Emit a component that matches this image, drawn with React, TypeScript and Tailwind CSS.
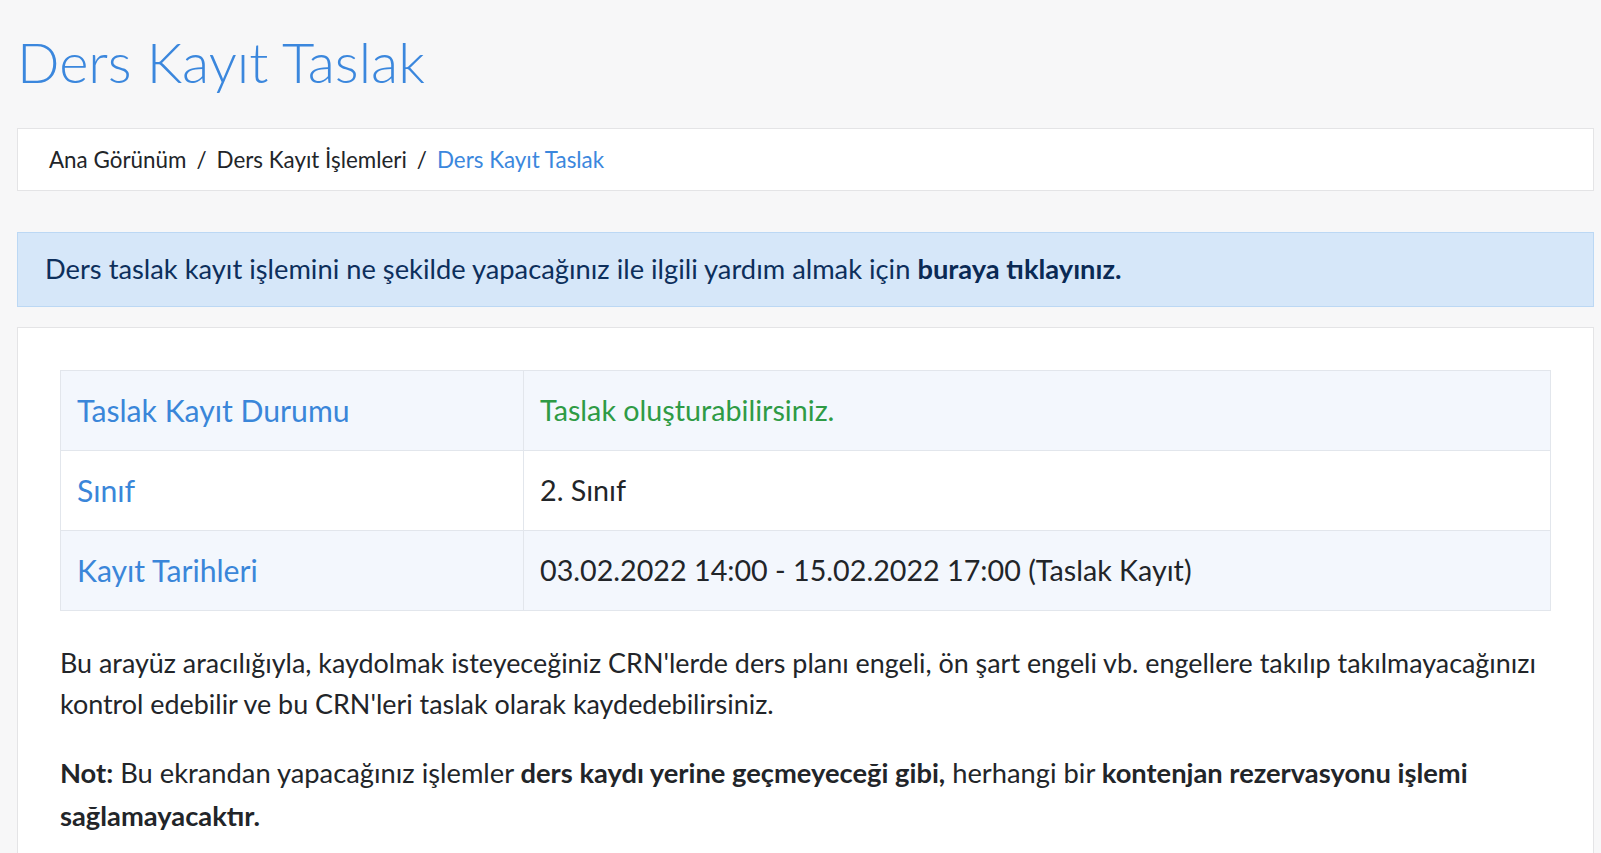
import React from 'react'

const rows = [
  { label: 'Taslak Kayıt Durumu', value: 'Taslak oluşturabilirsiniz.', tone: 'text-[#2e9b45]', striped: true },
  { label: 'Sınıf', value: '2. Sınıf', tone: 'text-[#222529]', striped: false },
  {
    label: 'Kayıt Tarihleri',
    value: '03.02.2022 14:00 - 15.02.2022 17:00 (Taslak Kayıt)',
    tone: 'text-[#222529]',
    striped: true,
  },
]

export default function App() {
  return (
    <div
      className="min-h-screen bg-[#f7f7f8] pl-[17px] pr-[7px] text-[#222529]"
      style={{ fontFamily: 'Lato, "Noto Sans", sans-serif' }}
    >
      <h1 className="pt-[22px] text-[56px] font-light leading-[80px] text-[#3b87dd]">Ders Kayıt Taslak</h1>

      <nav className="mt-[26px] flex h-[63px] items-center border border-[#e4e4e6] bg-white pl-[31px] text-[22.4px]">
        <span>Ana Görünüm</span>
        <span className="px-[10px]">/</span>
        <span>Ders Kayıt İşlemleri</span>
        <span className="px-[10px]">/</span>
        <span className="text-[#3b87dd]">Ders Kayıt Taslak</span>
      </nav>

      <div className="mt-[41px] flex h-[75px] items-center border border-[#bcd8f4] bg-[#d6e7f9] pl-[27px] text-[27.3px] text-[#0d2f5c]">
        <p>
          Ders taslak kayıt işlemini ne şekilde yapacağınız ile ilgili yardım almak için{' '}
          <b className="font-bold text-[#0a2a55]">buraya tıklayınız.</b>
        </p>
      </div>

      <div className="mt-[20px] min-h-[540px] border border-[#e4e4e6] bg-white px-[42px] pt-[42px]">
        <table className="w-full border-collapse">
          <tbody>
            {rows.map(({ label, value, tone, striped }) => (
              <tr key={label} className={striped ? 'bg-[#f3f7fd]' : 'bg-white'}>
                <td className="h-[80px] w-[463px] border border-[#e2e6ec] px-[16px] text-[30.2px] text-[#3a86d9]">
                  {label}
                </td>
                <td className={`h-[80px] border border-[#e2e6ec] px-[16px] text-[28.7px] ${tone}`}>{value}</td>
              </tr>
            ))}
          </tbody>
        </table>

        <p className="mt-[31px] text-[26.9px] leading-[41px]">
          <span className="block whitespace-nowrap">
            Bu arayüz aracılığıyla, kaydolmak isteyeceğiniz CRN'lerde ders planı engeli, ön şart engeli vb. engellere
            takılıp takılmayacağınızı
          </span>
          <span className="block whitespace-nowrap">
            kontrol edebilir ve bu CRN'leri taslak olarak kaydedebilirsiniz.
          </span>
        </p>
        <p className="mt-[27px] text-[27.3px] leading-[43px]">
          <span className="block whitespace-nowrap">
            <b>Not:</b> Bu ekrandan yapacağınız işlemler <b>ders kaydı yerine geçmeyeceği gibi,</b> herhangi bir{' '}
            <b>kontenjan rezervasyonu işlemi</b>
          </span>
          <b className="block">sağlamayacaktır.</b>
        </p>
      </div>
    </div>
  )
}
